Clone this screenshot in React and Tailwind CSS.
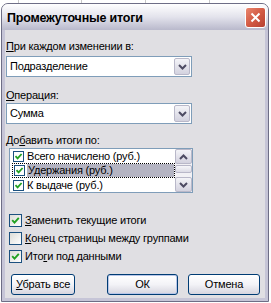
const Check = ({ size = 11 }) => (
  <svg width={size - 2} height={size - 2} viewBox="0 0 9 9" className="block">
    <path d="M1.5 4.2 L3.6 6.4 L7.6 2" fill="none" stroke="#21a121" strokeWidth="1.8" />
  </svg>
);

const SmallBox = () => (
  <div className="w-[11px] h-[11px] border border-[#1c5180] bg-white flex items-center justify-center shrink-0">
    <Check size={11} />
  </div>
);

const BigBox = ({ checked }) => (
  <div className="w-[13px] h-[13px] border border-[#1c5180] bg-gradient-to-br from-[#dcdcd7] to-white flex items-center justify-center shrink-0">
    {checked && (
      <svg width="9" height="9" viewBox="0 0 9 9" className="block">
        <path d="M1.2 4.2 L3.5 6.6 L7.8 1.8" fill="none" stroke="#21a121" strokeWidth="1.9" />
      </svg>
    )}
  </div>
);

const Chevron = ({ up }) => (
  <svg width="9" height="6" viewBox="0 0 9 6" className="block">
    <path
      d={up ? "M1 5 L4.5 1.5 L8 5" : "M1 1 L4.5 4.5 L8 1"}
      fill="none"
      stroke="#4d4b63"
      strokeWidth="2"
    />
  </svg>
);

const DropBtn = () => (
  <div className="w-[16px] h-full rounded-[2px] border border-[#b9b8c9] bg-gradient-to-b from-[#f4f4f8] to-[#d3d2df] flex items-center justify-center">
    <Chevron />
  </div>
);

const Combo = ({ value }) => (
  <div className="w-[186px] h-[21px] border border-[#7f9db9] bg-white flex items-center">
    <div className="flex-1 pl-[3px] leading-[13px]">{value}</div>
    <div className="h-full py-[1px] pr-[1px]">
      <DropBtn />
    </div>
  </div>
);

const Btn = ({ children, def, w }) => (
  <div
    className={`${w} h-[21px] rounded-[3px] border border-[#003c74] bg-gradient-to-b from-white via-[#f3f3f7] to-[#d6d5df] flex items-center justify-center leading-[13px] whitespace-nowrap ${
      def ? "shadow-[inset_0_0_0_1px_#b8c6e8]" : ""
    }`}
  >
    {children}
  </div>
);

export default function App() {
  return (
    <div className="relative w-[271px] h-[303px] bg-white overflow-hidden font-['Liberation_Sans',Arial,sans-serif] text-[11px] tracking-[-0.2px] text-black">
      <div className="absolute top-0 left-[18px] w-px h-[6px] bg-[#c8c8c8]" />
      <div className="absolute top-0 left-[81px] w-px h-[6px] bg-[#c8c8c8]" />
      <div className="absolute top-0 left-[145px] w-px h-[6px] bg-[#c8c8c8]" />
      <div className="absolute top-0 left-[209px] w-px h-[6px] bg-[#c8c8c8]" />
      <div className="absolute left-[1px] top-[3px] w-[268px] h-[299px] flex flex-col rounded-t-[7px] overflow-hidden border border-[#6e6e86] bg-[#e0dfe3]">
        {/* title bar */}
        <div className="h-[26px] shrink-0 bg-gradient-to-b from-white via-[#e3e3ec] to-[#b9b9cc] flex items-center pl-[5px] pr-[2px]">
          <div className="flex-1 font-bold text-[12.5px] tracking-[-0.2px] leading-[16px] pt-[1px]">
            Промежуточные итоги
          </div>
          <div className="w-[21px] h-[21px] rounded-[3px] border border-white bg-gradient-to-br from-[#e9876f] via-[#d35a44] to-[#b73f30] flex items-center justify-center">
            <svg width="11" height="11" viewBox="0 0 11 11">
              <path d="M1.5 1.5 L9.5 9.5 M9.5 1.5 L1.5 9.5" stroke="white" strokeWidth="2" />
            </svg>
          </div>
        </div>
        {/* body */}
        <div className="flex-1 flex flex-col border-l-[3px] border-r-[3px] border-b-[3px] border-[#c6c5d7] pl-[1px]">
          <div className="mt-[10px] leading-[13px]">
            <span className="underline">П</span>ри каждом изменении в:
          </div>
          <div className="mt-[3px]">
            <Combo value="Подразделение" />
          </div>
          <div className="mt-[12px] leading-[13px]">
            <span className="underline">О</span>перация:
          </div>
          <div className="mt-[1px]">
            <Combo value="Сумма" />
          </div>
          <div className="mt-[10px] leading-[13px]">
            До<span className="underline">б</span>авить итоги по:
          </div>
          <div className="mt-[1px] ml-[3px] w-[184px] h-[45px] border border-[#7f9db9] bg-white flex">
            <div className="flex-1 flex flex-col pl-[2px]">
              <div className="h-[14px] flex items-center gap-[3px] pl-[1px]">
                <SmallBox />
                <span className="leading-[13px]">Всего начислено (руб.)</span>
              </div>
              <div className="h-[15px] flex items-center gap-[2px] pl-[1px] border border-dotted border-black">
                <SmallBox />
                <span className="flex-1 bg-[#b4b4c2] leading-[13px] pl-[1px]">Удержания (руб.)</span>
              </div>
              <div className="h-[14px] flex items-center gap-[3px] pl-[1px]">
                <SmallBox />
                <span className="leading-[13px]">К выдаче (руб.)</span>
              </div>
            </div>
            <div className="w-[17px] flex flex-col bg-[#f2f1f5]">
              <div className="h-[15px] rounded-[2px] border border-[#b9b8c9] bg-gradient-to-b from-[#f4f4f8] to-[#d3d2df] flex items-center justify-center">
                <Chevron up />
              </div>
              <div className="mt-[1px] h-[8px] rounded-[2px] border border-[#b9b8c9] bg-gradient-to-b from-[#f7f7fa] to-[#dcdbe5]" />
              <div className="flex-1" />
              <div className="h-[15px] rounded-[2px] border border-[#b9b8c9] bg-gradient-to-b from-[#f4f4f8] to-[#d3d2df] flex items-center justify-center">
                <Chevron />
              </div>
            </div>
          </div>
          <div className="mt-[21px] ml-[3px] flex flex-col gap-[5px]">
            <div className="flex items-center gap-[3px] h-[13px]">
              <BigBox checked />
              <span className="leading-[13px]">
                <span className="underline">З</span>аменить текущие итоги
              </span>
            </div>
            <div className="flex items-center gap-[3px] h-[13px]">
              <BigBox />
              <span className="leading-[13px]">
                <span className="underline">К</span>онец страницы между группами
              </span>
            </div>
            <div className="flex items-center gap-[3px] h-[13px]">
              <BigBox checked />
              <span className="leading-[13px]">
                Ито<span className="underline">г</span>и под данными
              </span>
            </div>
          </div>
          <div className="mt-[11px] flex items-center pl-[5px]">
            <Btn w="w-[64px]">
              <span>
                <span className="underline">У</span>брать все
              </span>
            </Btn>
            <div className="ml-[32px]">
              <Btn w="w-[71px]" def>
                ОК
              </Btn>
            </div>
            <div className="ml-[10px]">
              <Btn w="w-[72px]">Отмена</Btn>
            </div>
          </div>
        </div>
      </div>
    </div>
  );
}
